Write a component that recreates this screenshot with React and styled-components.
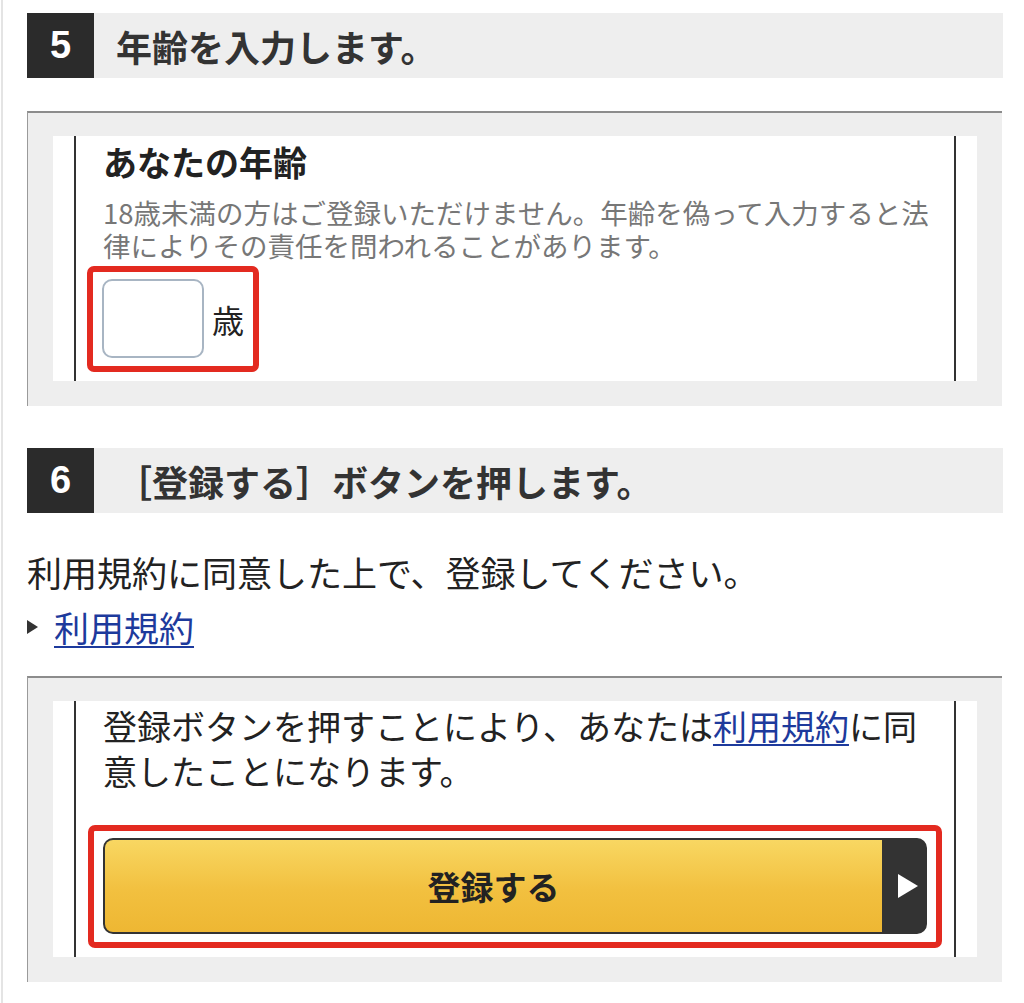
import React from 'react'
import styled, { createGlobalStyle } from 'styled-components'

const GlobalStyle = createGlobalStyle`
  html, body {
    margin: 0;
    padding: 0;
    background: #fff;
  }
  body {
    font-family: "Noto Sans CJK JP", "Noto Sans", sans-serif;
    color: #222;
  }
`

const Page = styled.div`
  margin-left: 1px;
  border-left: 2px solid #e4e4e4;
  padding: 13px 21px 20px 24px;
  min-height: 970px;
`

const StepHeader = styled.div`
  display: flex;
  align-items: center;
  height: 65px;
  background: #eeeeee;
  margin-top: ${(p) => p.$top || 0}px;
`

const StepNum = styled.div`
  width: 67px;
  height: 100%;
  display: flex;
  align-items: center;
  justify-content: center;
  background: #2b2b2b;
  color: #fff;
  font-family: "Liberation Sans", Arial, sans-serif;
  font-weight: 700;
  font-size: 38px;
`

const StepTitle = styled.h2`
  margin: 0 0 0 22px;
  font-size: 36px;
  font-weight: 700;
  color: #333;
  line-height: 1;
  white-space: nowrap;
`

const GrayBox = styled.div`
  margin-top: ${(p) => p.$top || 0}px;
  width: 975px;
  background: #eeeeee;
  border-top: 2px solid #8c8c8c;
  border-left: 1px solid #9a9a9a;
  padding: 23px 25px 25px 25px;
  box-sizing: border-box;
`

const WhitePanel = styled.div`
  background: #fff;
  padding: 0 21px;
`

const Fieldset = styled.div`
  border-left: 2px solid #333;
  border-right: 2px solid #333;
  padding: ${(p) => p.$pt || 0}px 0 9px 27px;
`

const FieldTitle = styled.h3`
  margin: 0;
  font-size: 34px;
  font-weight: 700;
  line-height: 44px;
  color: #222;
`

const Note = styled.p`
  margin: 12px 0 0;
  font-size: 27.5px;
  line-height: 33px;
  color: #777;
  white-space: nowrap;
`

const Highlight = styled.div`
  display: ${(p) => (p.$block ? 'block' : 'inline-flex')};
  align-items: center;
  gap: 8px;
  border: 6px solid #e32a20;
  border-radius: 7px;
  padding: 7px 9px 8px 9px;
  margin: ${(p) => p.$margin};
`

const AgeInput = styled.input`
  width: 102px;
  height: 79px;
  box-sizing: border-box;
  border: 2px solid #a8b5c3;
  border-radius: 10px;
  background: #fff;
  outline: none;
  font-size: 30px;
`

const Unit = styled.span`
  font-size: 32px;
  color: #222;
  line-height: 1;
`

const BodyText = styled.p`
  margin: ${(p) => p.$margin || 0};
  font-size: ${(p) => p.$size || 35}px;
  line-height: 45px;
  color: #222;
  white-space: nowrap;
`

const Link = styled.a`
  color: #1d3a9c;
  text-decoration: underline;
  text-underline-offset: 4px;
  text-decoration-thickness: 2px;
`

const LinkRow = styled.div`
  display: flex;
  align-items: center;
  margin-top: 10px;
  font-size: 35px;
  line-height: 45px;
`

const Arrow = styled.span`
  width: 0;
  height: 0;
  border-top: 7.5px solid transparent;
  border-bottom: 7.5px solid transparent;
  border-left: 11px solid #333;
  margin-right: 16px;
`

const Button = styled.button`
  display: flex;
  width: 100%;
  height: 96px;
  padding: 0;
  border: 2px solid #333;
  border-radius: 10px;
  overflow: hidden;
  background: #333;
  cursor: pointer;
  font-family: inherit;
`

const ButtonLabel = styled.span`
  flex: 1;
  display: flex;
  align-items: center;
  justify-content: center;
  background: linear-gradient(#f8d762, #f2c03f 55%, #eeb733);
  font-size: 33px;
  font-weight: 700;
  color: #222;
`

const ButtonSide = styled.span`
  width: 43px;
  display: flex;
  align-items: center;
  justify-content: center;
  padding-left: 8px;
  box-sizing: border-box;
`

const Play = styled.span`
  width: 0;
  height: 0;
  border-top: 12px solid transparent;
  border-bottom: 12px solid transparent;
  border-left: 20px solid #fff;
`

export default function App() {
  return (
    <>
      <GlobalStyle />
      <Page>
        <StepHeader>
          <StepNum>5</StepNum>
          <StepTitle>年齢を入力します。</StepTitle>
        </StepHeader>

        <GrayBox $top={33}>
          <WhitePanel>
            <Fieldset $pt={4}>
              <FieldTitle>あなたの年齢</FieldTitle>
              <Note>
                18歳未満の方はご登録いただけません。年齢を偽って入力すると法
                <br />
                律によりその責任を問われることがあります。
              </Note>
              <Highlight $margin="4px 0 0 -16px">
                <AgeInput type="text" />
                <Unit>歳</Unit>
              </Highlight>
            </Fieldset>
          </WhitePanel>
        </GrayBox>

        <StepHeader $top={42}>
          <StepNum>6</StepNum>
          <StepTitle>［登録する］ボタンを押します。</StepTitle>
        </StepHeader>

        <BodyText $margin="36px 0 0">利用規約に同意した上で、登録してください。</BodyText>
        <LinkRow>
          <Arrow />
          <Link href="#">利用規約</Link>
        </LinkRow>

        <GrayBox $top={27}>
          <WhitePanel>
            <Fieldset $pt={2}>
              <BodyText $size={34}>
                登録ボタンを押すことにより、あなたは<Link href="#">利用規約</Link>に同
                <br />
                意したことになります。
              </BodyText>
              <Highlight $block $margin="32px 12px 0 -15px">
                <Button type="button">
                  <ButtonLabel>登録する</ButtonLabel>
                  <ButtonSide>
                    <Play />
                  </ButtonSide>
                </Button>
              </Highlight>
            </Fieldset>
          </WhitePanel>
        </GrayBox>
      </Page>
    </>
  )
}
